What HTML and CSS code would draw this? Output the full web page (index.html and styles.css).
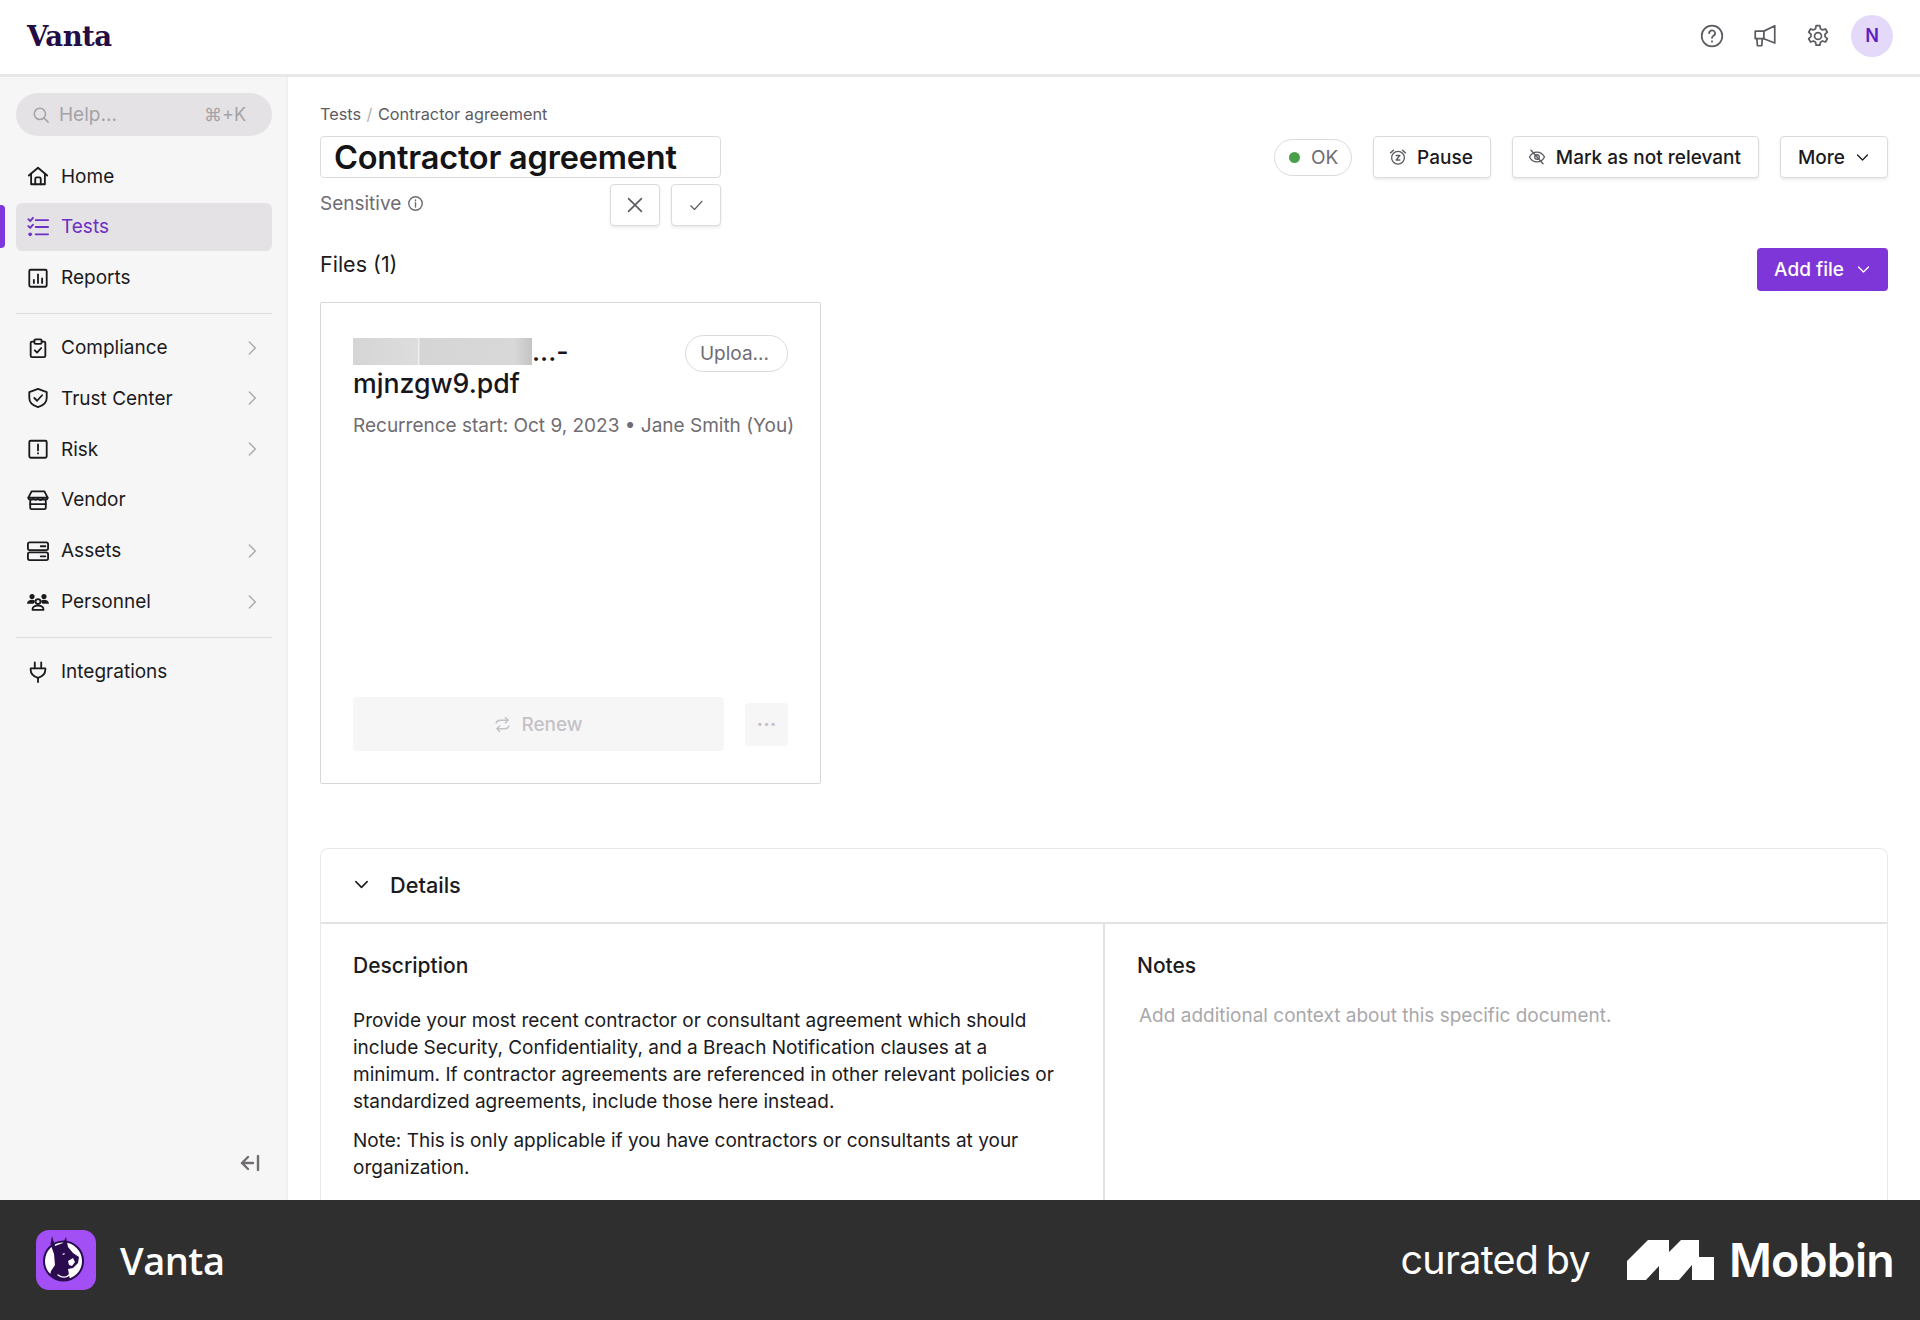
FILE: index.html
```html
<!DOCTYPE html>
<html lang="en">
<head>
<meta charset="utf-8">
<title>Contractor agreement</title>
<link rel="stylesheet" href="styles.css">
</head>
<body>
<div class="app">
	<header class="topbar">
		<div class="brand">Vanta</div>
		<div class="top_icons">
			<svg class="top_icon" viewBox="0 0 24 24"><circle cx="12" cy="12" r="9.500"/><path d="M9.400 9.400a2.700 2.700 0 1 1 4 2.400c-.9.500-1.400 1-1.400 2"/><path d="M12 16.800v.4"/></svg>
			<svg class="top_icon" viewBox="0 0 24 24"><path d="M3 7.500h8L21 2.500v16l-10-4H3z"/><path d="M4.500 14.500l.5 6.500h4l.5-6.500"/><path d="M11 7.500v7"/></svg>
			<svg class="top_icon" viewBox="0 0 24 24"><circle cx="12" cy="12" r="3.200"/><path d="M10.300 2.500h3.400l.6 2.800 1.900 1.100 2.700-.9 1.700 3-2.100 1.900v2.200l2.100 1.900-1.700 3-2.700-.9-1.900 1.100-.6 2.800h-3.400l-.6-2.800-1.900-1.100-2.700.9-1.700-3 2.100-1.900v-2.200L3.400 8.500l1.700-3 2.700.9 1.900-1.100z"/></svg>
			<div class="avatar">N</div>
		</div>
	</header>

	<div class="middle">
		<aside class="sidebar">
			<div class="search">
				<svg class="search_icon" viewBox="0 0 24 24"><circle cx="10.500" cy="10.500" r="7.500"/><path d="M16 16l5.500 5.500"/></svg>
				<span class="search_text">Help...</span>
				<span class="search_key">⌘+K</span>
			</div>
			<nav class="nav">
				<a class="nav_item">
					<svg class="nav_icon" viewBox="0 0 24 24"><path d="M2 11.500L12 3l10 8.500"/><path d="M4.500 9.500V21h15V9.500"/><path d="M9 21v-6a1.500 1.500 0 0 1 1.500-1.500h3A1.500 1.500 0 0 1 15 15v6"/></svg>
					Home
				</a>
				<a class="nav_item active">
					<span class="nav_marker"></span>
					<svg class="nav_icon wide" viewBox="0 0 24 24"><path d="M1.500 3.500l2 2L6.500 2"/><path d="M1.500 11l2 2 3-3.500"/><path d="M9.500 4.500H23M9.500 12H23M9.500 20H23"/><circle class="dot" cx="3.500" cy="20" r="2"/></svg>
					Tests
				</a>
				<a class="nav_item">
					<svg class="nav_icon" viewBox="0 0 24 24"><rect x="2.500" y="3" width="19" height="18.500" rx="1.500"/><path d="M7.500 17.500V14M12 17.500V8M16.500 17.500V12.500"/></svg>
					Reports
				</a>
				<div class="nav_rule"></div>
				<a class="nav_item">
					<svg class="nav_icon" viewBox="0 0 24 24"><path d="M8 5H5.500A1.500 1.500 0 0 0 4 6.500v14A1.500 1.500 0 0 0 5.500 22h13a1.500 1.500 0 0 0 1.500-1.500v-14A1.500 1.500 0 0 0 18.500 5H16"/><rect x="8" y="2.500" width="8" height="5" rx="1.500"/><path d="M8.500 14.500l2.500 2.500 4.500-5"/></svg>
					Compliance
					<svg class="nav_arrow" viewBox="0 0 24 24"><path d="M8 3l9 9-9 9"/></svg>
				</a>
				<a class="nav_item">
					<svg class="nav_icon" viewBox="0 0 24 24"><path d="M12 2l9.500 3.500v6.500c0 5-4.500 8.500-9.500 10-5-1.500-9.500-5-9.500-10V5.500z"/><path d="M8 12l3 3 5.500-6"/></svg>
					Trust Center
					<svg class="nav_arrow" viewBox="0 0 24 24"><path d="M8 3l9 9-9 9"/></svg>
				</a>
				<a class="nav_item">
					<svg class="nav_icon" viewBox="0 0 24 24"><rect x="2.500" y="3" width="19" height="18.500" rx="1.500"/><path d="M12 7v6.500M12 16.500v.5"/></svg>
					Risk
					<svg class="nav_arrow" viewBox="0 0 24 24"><path d="M8 3l9 9-9 9"/></svg>
				</a>
				<a class="nav_item">
					<svg class="nav_icon" viewBox="0 0 24 24"><path d="M5 2.500h14l3.500 7H1.500z"/><path d="M1.500 9.500c0 2.500 3.500 3 5.300 1.200 1.500 1.500 3.700 1.500 5.200 0 1.500 1.500 3.700 1.500 5.200 0 1.800 1.800 5.300 1.300 5.300-1.200"/><path d="M3.500 13v7.500A1.500 1.500 0 0 0 5 22h14a1.500 1.500 0 0 0 1.500-1.500V13"/><path d="M3.500 16.500h17"/></svg>
					Vendor
				</a>
				<a class="nav_item">
					<svg class="nav_icon wide" viewBox="0 0 24 24"><rect x="1" y="2.500" width="22" height="8.500" rx="2"/><rect x="1" y="13.500" width="22" height="8.500" rx="2"/><path d="M15 6.800h5M15 17.800h5"/></svg>
					Assets
					<svg class="nav_arrow" viewBox="0 0 24 24"><path d="M8 3l9 9-9 9"/></svg>
				</a>
				<a class="nav_item">
					<svg class="nav_icon wide" viewBox="0 0 24 24"><circle class="dot" cx="5.500" cy="6" r="2.800"/><circle class="dot" cx="18.500" cy="6" r="2.800"/><path class="dot" d="M0 14c0-3 2.500-4.500 5.500-4.500S9 10.500 8.500 12L7 14zM24 14c0-3-2.500-4.500-5.500-4.500S15 10.500 15.500 12l1.500 2z"/><circle cx="12" cy="11.500" r="2.700"/><path d="M6 20.500c0-3 2.500-4.500 6-4.500s6 1.500 6 4.500z"/></svg>
					Personnel
					<svg class="nav_arrow" viewBox="0 0 24 24"><path d="M8 3l9 9-9 9"/></svg>
				</a>
				<div class="nav_rule"></div>
				<a class="nav_item">
					<svg class="nav_icon" viewBox="0 0 24 24"><path d="M8.500 1.500V8M15.500 1.500V8"/><path d="M4 8h16v1.500c0 5-3.500 7.500-8 9-4.500-1.500-8-4-8-9z"/><path d="M12 18.500V23"/></svg>
					Integrations
				</a>
			</nav>
			<div class="collapse">
				<svg viewBox="0 0 20 16"><path d="M8 2L2 8l6 6M2 8h11M18 1v14"/></svg>
			</div>
		</aside>

		<main class="content">
			<div class="crumbs"><span>Tests</span><i>/</i><span>Contractor agreement</span></div>

			<div class="title_row">
				<div class="title_col">
					<div class="title_box">Contractor agreement</div>
					<div class="title_sub">
						<span class="sensitive">Sensitive
							<svg viewBox="0 0 24 24"><circle cx="12" cy="12" r="9.500"/><path d="M12 11v6M12 7v1"/></svg>
						</span>
						<div class="title_btns">
							<button class="btn square"><svg class="ic_x" viewBox="0 0 24 24"><path d="M5 5l14 14M19 5L5 19"/></svg></button>
							<button class="btn square"><svg class="ic_ok" viewBox="0 0 24 24"><path d="M5 13l5 5L20 7"/></svg></button>
						</div>
					</div>
				</div>
				<div class="actions">
					<span class="status"><b></b>OK</span>
					<button class="btn action"><svg class="btn_icon" viewBox="0 0 24 24"><circle cx="12" cy="13" r="8.500"/><path d="M9.500 10h5l-5 6h5M2 6.500L6 3M22 6.500L18 3"/></svg>Pause</button>
					<button class="btn action"><svg class="btn_icon" viewBox="0 0 24 24"><path d="M2 12s3.500-6.500 10-6.500S22 12 22 12s-3.500 6.500-10 6.500S2 12 2 12z"/><circle cx="12" cy="12" r="3"/><path d="M4 3l16 18"/></svg>Mark as not relevant</button>
					<button class="btn action more">More<svg class="chev" viewBox="0 0 24 24"><path d="M4 8l8 8 8-8"/></svg></button>
				</div>
			</div>

			<div class="files_row">
				<h2 class="files_title">Files (1)</h2>
				<button class="btn_primary">Add file<svg class="chev" viewBox="0 0 24 24"><path d="M4 8l8 8 8-8"/></svg></button>
			</div>

			<section class="file_card">
				<div class="file_head">
					<div class="file_name"><span class="file_blur"></span>...-<br>mjnzgw9.pdf</div>
					<span class="file_pill">Uploa...</span>
				</div>
				<p class="file_meta">Recurrence start: Oct 9, 2023 • Jane Smith (You)</p>
				<div class="file_foot">
					<button class="renew"><svg viewBox="0 0 24 24"><path d="M3 10c1-3 3-4 6-4h11M16 2l4 4-4 4M21 14c-1 3-3 4-6 4H4M8 22l-4-4 4-4"/></svg>Renew</button>
					<button class="dots">···</button>
				</div>
			</section>

			<section class="details">
				<div class="details_head">
					<svg viewBox="0 0 24 24"><path d="M4 8l8 8 8-8"/></svg>
					Details
				</div>
				<div class="details_body">
					<div class="details_desc">
						<h3>Description</h3>
						<p>Provide your most recent contractor or consultant agreement which should include Security, Confidentiality, and a Breach Notification clauses at a minimum. If contractor agreements are referenced in other relevant policies or standardized agreements, include those here instead.</p>
						<p>Note: This is only applicable if you have contractors or consultants at your organization.</p>
					</div>
					<div class="details_notes">
						<h3>Notes</h3>
						<p class="notes_hint">Add additional context about this specific document.</p>
					</div>
				</div>
			</section>
		</main>
	</div>

	<footer class="credit">
		<div class="credit_app">
			<svg class="credit_logo" viewBox="0 0 60 60">
				<rect width="60" height="60" rx="13" fill="#a24ff5"/>
				<circle cx="27.500" cy="31" r="19.500" fill="#fff" stroke="#2a0b4e" stroke-width="2"/>
				<path d="M16 6L14.500 14 18 24 19 35 15 41 14 45 22 50 34 50 32 39 37 38 42 33 43 27 37 23 32 17 30 7 27 13 19 16Z" fill="#2a0b4e"/>
				<path d="M32 31l5-3 2 4-3 4-3-1z M26 24l3-1-1 2z" fill="#fff"/>
				<path d="M22 45c4 3 9 3 12-1" stroke="#fff" stroke-width="1.300" fill="none"/>
			</svg>
			<span class="credit_name">Vanta</span>
		</div>
		<div class="credit_by">
			<span class="credit_curated">curated by</span>
			<svg class="mobbin_mark" viewBox="0 0 87 40"><path d="M0 21L21 0h21v12L54 0h18v17h15v23H65V25L52 40H32V26L19 40H0z" fill="#fff"/></svg>
			<span class="mobbin_name">Mobbin</span>
		</div>
	</footer>
</div>
</body>
</html>
```

FILE: styles.css
```css
* {margin:0; padding:0; box-sizing:border-box}
html, body {height:100%}
body {
	font-family:"Inter", "Liberation Sans", sans-serif;
	color:#1b1a1d;
	background:#fff;
	overflow:hidden;
}
svg {display:block; fill:none; stroke:currentColor; stroke-linecap:round; stroke-linejoin:round}
button {font-family:inherit; cursor:pointer}

.app {
	display:flex;
	flex-direction:column;
	height:1320px;
}

/* top bar */
.topbar {
	flex:none;
	display:flex;
	align-items:center;
	justify-content:space-between;
	height:77px;
	padding:0 27px 2px 27px;
	border-bottom:3px solid #e9e7e9;
}
.brand {
	font-family:"DejaVu Serif", serif;
	font-weight:700;
	font-size:27.500px;
	letter-spacing:-0.500px;
	color:#240c45;
}
.top_icons {
	display:flex;
	align-items:center;
}
.top_icon {
	width:26px;
	height:26px;
	margin-right:27px;
	stroke-width:1.600;
	color:#5d5a60;
}
.avatar {
	width:42px;
	height:42px;
	margin-left:-7px;
	border-radius:50%;
	background:#e5d9fa;
	color:#5f1fbf;
	font-size:18px;
	font-weight:600;
	text-align:center;
	line-height:42px;
}

.middle {
	flex:1;
	display:flex;
	min-height:0;
}

/* sidebar */
.sidebar {
	flex:none;
	display:flex;
	flex-direction:column;
	position:relative;
	width:288px;
	padding:16px 14px 0 16px;
	background:#f7f6f7;
	border-right:2px solid #f1f0f1;
}
.search {
	display:flex;
	align-items:center;
	height:43px;
	padding:0 26px 0 16px;
	border-radius:22px;
	background:#e4e2e4;
	color:#a5a3a7;
	font-size:19px;
}
.search_icon {width:18px; height:18px; stroke-width:2; margin-right:9px}
.search_key {margin-left:auto; font-size:18px}

.nav {margin-top:16px}
.nav_item {
	display:flex;
	align-items:center;
	height:48px;
	margin-bottom:2.800px;
	padding:0 12px 0 11px;
	border-radius:6px;
	font-size:19px;
	color:#1b1a1d;
}
.nav_icon {
	flex:none;
	width:22px;
	height:22px;
	margin-right:12px;
	stroke-width:2;
}
.nav_icon.wide {width:24px; margin:0 11px 0 -1px}
.nav_icon .dot {fill:currentColor; stroke-width:0}
.nav_arrow {
	width:16px;
	height:16px;
	margin-left:auto;
	stroke-width:2;
	color:#a9a7ab;
}
.nav_item.active {
	position:relative;
	background:#e4e2e4;
	color:#6d2fc4;
}
.nav_marker {
	position:absolute;
	left:-16px;
	top:2px;
	width:5px;
	height:43px;
	border-radius:0 4px 4px 0;
	background:#7d37dc;
}
.nav_rule {
	height:1px;
	margin:11px 0 10px;
	background:#dedcde;
}
.collapse {
	position:absolute;
	right:26px;
	bottom:29px;
	color:#6f6c72;
}
.collapse svg {width:20px; height:16px; stroke-width:2.400}

/* main column */
.content {
	flex:1;
	min-width:0;
	padding:28px 32px 0;
	overflow:hidden;
}
.crumbs {
	display:flex;
	gap:5.500px;
	font-size:16.300px;
	line-height:19px;
	color:#5e5b61;
}
.crumbs i {font-style:normal; color:#b4b2b6}

.title_row {
	display:flex;
	justify-content:space-between;
	align-items:flex-start;
	margin-top:12px;
}
.title_col {width:401px}
.title_box {
	height:42px;
	padding-left:13px;
	border:1px solid #dcdadd;
	border-radius:4px;
	font-size:32.500px;
	font-weight:600;
	line-height:41px;
	letter-spacing:-0.200px;
	color:#141316;
}
.title_sub {
	display:flex;
	justify-content:space-between;
	margin-top:6px;
}
.sensitive {
	display:flex;
	align-items:center;
	gap:6px;
	height:26px;
	margin-top:6px;
	font-size:19px;
	color:#6f6c72;
}
.sensitive svg {width:17px; height:17px; stroke-width:2}
.title_btns {display:flex; gap:11px}

.btn {
	display:flex;
	align-items:center;
	justify-content:center;
	height:42px;
	border:1px solid #dcdadd;
	border-radius:4px;
	background:#fff;
	box-shadow:0 2px 3px rgba(0,0,0,.08);
	color:#1b1a1d;
	font-size:19px;
	font-weight:500;
}
.btn.square {width:50px; color:#5d5a60}
.ic_x {width:22px; height:22px; stroke-width:1.800}
.ic_ok {width:18px; height:18px; stroke-width:1.500}

.actions {
	display:flex;
	align-items:center;
	gap:21px;
}
.status {
	display:flex;
	align-items:center;
	gap:11px;
	width:78px;
	height:37px;
	padding-left:14px;
	border:1px solid #dcdadd;
	border-radius:19px;
	font-size:19px;
	color:#6f6c72;
}
.status b {
	width:11px;
	height:11px;
	border-radius:50%;
	background:#4aa04a;
}
.btn.action {padding:0 17px 0 15px; gap:10px}
.btn.more {padding:0 17px; gap:10px}
.btn_icon {width:18px; height:18px; stroke-width:1.800; color:#5d5a60}
.chev {width:15px; height:15px; stroke-width:2}

.files_row {
	display:flex;
	justify-content:space-between;
	align-items:flex-start;
	margin-top:22px;
}
.files_title {
	font-size:21.500px;
	font-weight:400;
	line-height:32px;
}
.btn_primary {
	display:flex;
	align-items:center;
	gap:12px;
	height:43px;
	padding:0 17px;
	border:0;
	border-radius:4px;
	background:#7f36d8;
	color:#fff;
	font-size:19px;
	font-weight:500;
}

/* file card */
.file_card {
	display:flex;
	flex-direction:column;
	width:501px;
	height:482px;
	margin-top:11px;
	padding:32px 32px 32px;
	border:1px solid #d9d7da;
	border-radius:2px;
}
.file_head {
	display:flex;
	justify-content:space-between;
	align-items:flex-start;
}
.file_name {
	font-size:26.700px;
	font-weight:500;
	line-height:32px;
	color:#17161a;
}
.file_blur {
	display:inline-block;
	vertical-align:-4px;
	width:179px;
	height:27px;
	background:linear-gradient(90deg, #d6d5d6 0, #dedddd 36%, #f4f4f4 36.500%, #d6d5d6 37.500%, #d9d8d9 90%, #c4c4c4 100%);
}
.file_pill {
	flex:none;
	width:103px;
	height:37px;
	border:1px solid #dcdadd;
	border-radius:19px;
	font-size:19px;
	line-height:35px;
	text-align:center;
	color:#6f6c72;
	padding-right:4px;
}
.file_meta {
	margin-top:14px;
	font-size:19px;
	line-height:26px;
	color:#6f6c72;
	white-space:nowrap;
}
.file_foot {
	display:flex;
	align-items:center;
	gap:21px;
	margin-top:auto;
}
.renew {
	display:flex;
	align-items:center;
	justify-content:center;
	gap:10px;
	width:371px;
	height:54px;
	border:0;
	border-radius:4px;
	background:#f7f6f7;
	color:#c4c2c6;
	font-size:19px;
	font-weight:500;
}
.renew svg {width:17px; height:17px; stroke-width:2}
.dots {
	width:43px;
	height:43px;
	border:0;
	border-radius:4px;
	background:#f7f6f7;
	color:#c4c2c6;
	font-size:20px;
	font-weight:700;
}

/* details */
.details {
	margin-top:64px;
	border:1px solid #e9e7ea;
	border-radius:8px 8px 0 0;
	height:420px;
}
.details_head {
	display:flex;
	align-items:center;
	gap:20px;
	height:75px;
	padding:0 0 2px 32px;
	border-bottom:2px solid #e4e2e4;
	font-size:21.700px;
	font-weight:500;
}
.details_head svg {width:17px; height:17px; stroke-width:2.200}
.details_body {
	display:grid;
	grid-template-columns:784px 1fr;
	height:100%;
}
.details_desc {
	padding:27px 32px 0;
	border-right:2px solid #e4e2e4;
}
.details_notes {padding:27px 32px 0}
.details_body h3 {
	font-size:21px;
	font-weight:500;
	line-height:30px;
}
.details_desc p {
	margin-top:12px;
	font-size:19px;
	line-height:27px;
	color:#1b1a1d;
}
.details_desc h3 + p {margin-top:26px}
.notes_hint {
	margin:22px 0 0 2px;
	font-size:19px;
	line-height:26px;
	color:#a9a7ab;
}

/* mobbin strip */
.credit {
	flex:none;
	display:flex;
	align-items:center;
	justify-content:space-between;
	position:relative;
	height:120px;
	padding:0 26px 0 36px;
	background:#2f2f2f;
	color:#fff;
}
.credit_app {display:flex; align-items:center; gap:24px}
.credit_logo {width:60px; height:60px; stroke:none}
.credit_name {font-family:"Open Sans", sans-serif; font-size:38px; font-weight:600; letter-spacing:-0.500px}
.credit_by {display:flex; align-items:center}
.credit_curated {font-size:39.500px; letter-spacing:-0.700px; word-spacing:-3px; margin-right:37px}
.mobbin_mark {width:87px; height:40px; stroke:none; margin-right:15px}
.mobbin_name {font-size:46.500px; font-weight:600; letter-spacing:-0.800px}
```
